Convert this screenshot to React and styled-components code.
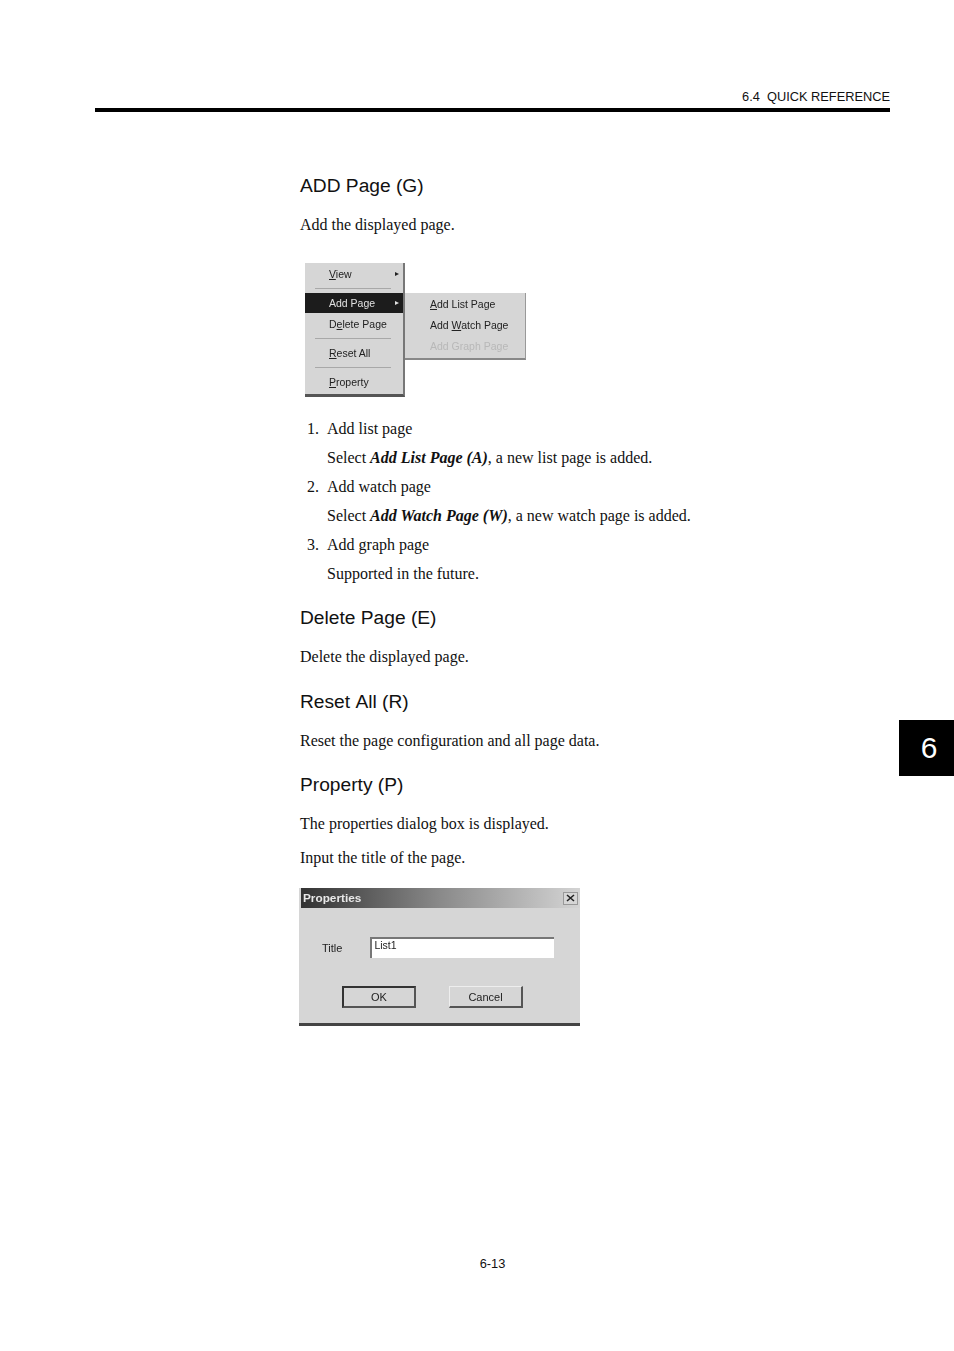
import styled, { createGlobalStyle } from "styled-components";

const GlobalStyle = createGlobalStyle`
  html, body {
    margin: 0;
    padding: 0;
    background: #fff;
  }
`;

const Page = styled.div`
  position: relative;
  width: 954px;
  height: 1351px;
  box-sizing: border-box;
  padding: 89px 64px 0 95px;
  display: flex;
  flex-direction: column;
  overflow: hidden;
  color: #111;
  font-family: "Liberation Serif", "Times New Roman", serif;
`;

const RunningHead = styled.header`
  border-bottom: 4px solid #000;
  height: 19px;
  text-align: right;
  font-family: "Liberation Sans", Arial, sans-serif;
  font-size: 12.8px;
  line-height: 16px;
  white-space: pre;
`;

const Content = styled.main`
  margin-left: 205px;
  padding-top: 62px;
  flex: 1;
`;

const Heading = styled.h2`
  margin: ${(p) => p.$top || 0}px 0 0;
  font-family: "Liberation Sans", Arial, sans-serif;
  font-size: 19.2px;
  font-weight: 400;
  font-kerning: none;
  line-height: 24px;
`;

const Para = styled.p`
  margin: ${(p) => p.$top || 0}px 0 0;
  font-size: 16px;
  line-height: 18px;
`;

const List = styled.ol`
  margin: 23px 0 0;
  padding: 0;
  list-style: none;
  font-size: 16px;
  line-height: 18px;
`;

const Item = styled.li`
  display: grid;
  grid-template-columns: 27px 1fr;
  row-gap: 11px;
  margin-bottom: 11px;
`;

const Num = styled.span`
  padding-left: 7px;
`;

const Sub = styled.span`
  grid-column: 2;
`;

const MenuShot = styled.div`
  display: flex;
  align-items: flex-start;
  margin: 29px 0 0 5px;
  font-family: "Liberation Sans", Arial, sans-serif;
  font-size: 10.5px;
  color: #222;
  filter: blur(0.7px);
`;

const Menu = styled.div`
  width: 100px;
  height: 134px;
  box-sizing: border-box;
  background: #d6d6d6;
  border-right: 2px solid #777;
  border-bottom: 3px solid #555;
`;

const SubMenu = styled.div`
  width: 121px;
  height: 67px;
  box-sizing: border-box;
  margin-top: 30px;
  background: #d6d6d6;
  border-right: 1px solid #999;
  border-bottom: 2px solid #888;
`;

const MenuRow = styled.div`
  display: flex;
  align-items: center;
  justify-content: space-between;
  height: ${(p) => p.$h || 21}px;
  padding: 0 4px 0 ${(p) => p.$left || 24}px;
  background: ${(p) => (p.$active ? "#1c1c1c" : "transparent")};
  color: ${(p) => (p.$active ? "#e0e0e0" : p.$disabled ? "#b8b8b8" : "#222")};
  u {
    text-underline-offset: 1px;
  }
`;

const MenuRule = styled.div`
  height: 1px;
  margin: 4px 12px ${(p) => p.$below || 3}px 10px;
  background: #a8a8a8;
`;

const Arrow = styled.span`
  width: 0;
  height: 0;
  border-left: 4px solid currentColor;
  border-top: 2.5px solid transparent;
  border-bottom: 2.5px solid transparent;
`;

const Dialog = styled.div`
  width: 281px;
  height: 138px;
  box-sizing: border-box;
  margin-top: 21px;
  margin-left: -1px;
  background: #d6d6d6;
  border-bottom: 3px solid #444;
  font-family: "Liberation Sans", Arial, sans-serif;
  font-size: 11px;
  color: #222;
  filter: blur(0.7px);
`;

const TitleBar = styled.div`
  height: 20px;
  margin: 0 0 0 2px;
  padding: 0 2px 0 2px;
  display: flex;
  align-items: center;
  justify-content: space-between;
  background: linear-gradient(90deg, #333 0%, #8a8a8a 50%, #d4d4d4 100%);
  color: #e8e8e8;
  font-size: 11.8px;
  font-weight: 700;
`;

const CloseBox = styled.span`
  display: flex;
  width: 15px;
  height: 13px;
  align-items: center;
  justify-content: center;
  background: #d6d6d6;
  border: 1px solid #999;
  box-sizing: border-box;
`;

const FieldRow = styled.div`
  display: flex;
  align-items: center;
  padding: 29px 0 0 23px;
  gap: 28px;
`;

const Input = styled.div`
  width: 184px;
  height: 21px;
  box-sizing: border-box;
  padding-left: 2px;
  background: #fff;
  border-top: 2px solid #777;
  border-left: 2px solid #777;
  font-size: 10.5px;
  line-height: 13px;
`;

const Buttons = styled.div`
  display: flex;
  gap: 33px;
  padding: 28px 0 0 43px;
`;

const Btn = styled.div`
  width: 74px;
  height: 22px;
  box-sizing: border-box;
  display: flex;
  align-items: center;
  justify-content: center;
  border: ${(p) => (p.$primary ? "2px solid #333" : "1px solid #eee")};
  border-right: 2px solid #555;
  border-bottom: 2px solid #555;
`;

const Footer = styled.footer`
  height: 95px;
  text-align: center;
  font-family: "Liberation Sans", Arial, sans-serif;
  font-size: 12.8px;
  line-height: 16px;
`;

const ChapterTab = styled.div`
  position: absolute;
  top: 720px;
  left: 899px;
  width: 55px;
  height: 56px;
  padding-left: 5px;
  box-sizing: border-box;
  display: flex;
  align-items: center;
  justify-content: center;
  background: #000;
  color: #fff;
  font-family: "Liberation Sans", Arial, sans-serif;
  font-size: 30px;
`;

const CloseIcon = () => (
  <svg width="9" height="8" viewBox="0 0 9 8">
    <path d="M1 1l7 6M8 1L1 7" stroke="#222" strokeWidth="1.6" fill="none" />
  </svg>
);

export default function App() {
  return (
    <Page>
      <GlobalStyle />
      <RunningHead>6.4  QUICK REFERENCE</RunningHead>
      <Content>
        <Heading>ADD Page (G)</Heading>
        <Para $top={18}>Add the displayed page.</Para>
        <MenuShot>
          <Menu>
            <MenuRow>
              <span><u>V</u>iew</span>
              <Arrow />
            </MenuRow>
            <MenuRule $below={4} />
            <MenuRow $active $h={20}>
              <span>Add Page</span>
              <Arrow />
            </MenuRow>
            <MenuRow>
              <span>D<u>e</u>lete Page</span>
            </MenuRow>
            <MenuRule />
            <MenuRow>
              <span><u>R</u>eset All</span>
            </MenuRow>
            <MenuRule />
            <MenuRow>
              <span><u>P</u>roperty</span>
            </MenuRow>
          </Menu>
          <SubMenu>
            <MenuRow $left={25}>
              <span><u>A</u>dd List Page</span>
            </MenuRow>
            <MenuRow $left={25}>
              <span>Add <u>W</u>atch Page</span>
            </MenuRow>
            <MenuRow $left={25} $disabled>
              <span>Add Graph Page</span>
            </MenuRow>
          </SubMenu>
        </MenuShot>
        <List>
          <Item>
            <Num>1.</Num>
            <span>Add list page</span>
            <Sub>Select <b><i>Add List Page (A)</i></b>, a new list page is added.</Sub>
          </Item>
          <Item>
            <Num>2.</Num>
            <span>Add watch page</span>
            <Sub>Select <b><i>Add Watch Page (W)</i></b>, a new watch page is added.</Sub>
          </Item>
          <Item>
            <Num>3.</Num>
            <span>Add graph page</span>
            <Sub>Supported in the future.</Sub>
          </Item>
        </List>
        <Heading $top={23}>Delete Page (E)</Heading>
        <Para $top={18}>Delete the displayed page.</Para>
        <Heading $top={24}>Reset All (R)</Heading>
        <Para $top={18}>Reset the page configuration and all page data.</Para>
        <Heading $top={23}>Property (P)</Heading>
        <Para $top={18}>The properties dialog box is displayed.</Para>
        <Para $top={16}>Input the title of the page.</Para>
        <Dialog>
          <TitleBar>
            <span>Properties</span>
            <CloseBox><CloseIcon /></CloseBox>
          </TitleBar>
          <FieldRow>
            <span>Title</span>
            <Input>List1</Input>
          </FieldRow>
          <Buttons>
            <Btn $primary>OK</Btn>
            <Btn>Cancel</Btn>
          </Buttons>
        </Dialog>
      </Content>
      <Footer>6-13</Footer>
      <ChapterTab>6</ChapterTab>
    </Page>
  );
}
